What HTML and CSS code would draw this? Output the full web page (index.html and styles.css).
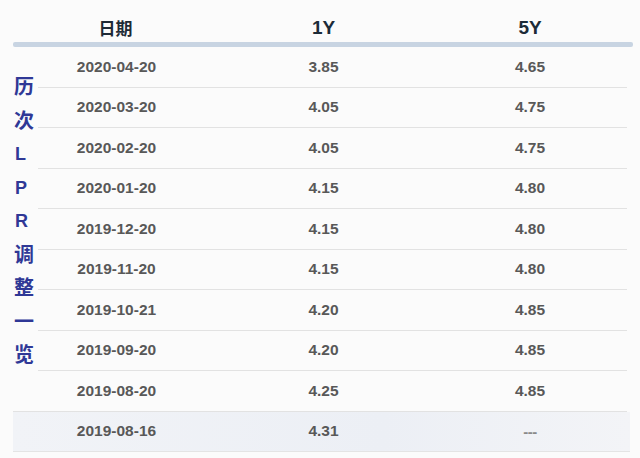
FILE: index.html
```html
<!DOCTYPE html>
<html lang="zh">
<head>
<meta charset="utf-8">
<link rel="stylesheet" href="styles.css">
</head>
<body>
<div class="page">
  <div class="table">
    <div class="head">
      <div class="hcell cn">日期</div>
      <div class="hcell">1Y</div>
      <div class="hcell">5Y</div>
    </div>
    <div class="bar"></div>
    <div class="row"><div>2020-04-20</div><div>3.85</div><div>4.65</div></div>
    <div class="row"><div>2020-03-20</div><div>4.05</div><div>4.75</div></div>
    <div class="row"><div>2020-02-20</div><div>4.05</div><div>4.75</div></div>
    <div class="row"><div>2020-01-20</div><div>4.15</div><div>4.80</div></div>
    <div class="row"><div>2019-12-20</div><div>4.15</div><div>4.80</div></div>
    <div class="row"><div>2019-11-20</div><div>4.15</div><div>4.80</div></div>
    <div class="row"><div>2019-10-21</div><div>4.20</div><div>4.85</div></div>
    <div class="row"><div>2019-09-20</div><div>4.20</div><div>4.85</div></div>
    <div class="row"><div>2019-08-20</div><div>4.25</div><div>4.85</div></div>
    <div class="row last"><div>2019-08-16</div><div>4.31</div><div class="dash">---</div></div>
  </div>
  <div class="vlabel">
    <span>历</span><span>次</span><span class="lat">L</span><span class="lat">P</span><span class="lat">R</span><span>调</span><span>整</span><span>一</span><span>览</span>
  </div>
</div>
</body>
</html>
```
FILE: styles.css
```css
html, body {
  margin: 0;
  padding: 0;
  background: #fbfbfb;
}
.page {
  position: relative;
  width: 640px;
  height: 458px;
  overflow: hidden;
  font-family: "Liberation Sans", Arial, "Noto Sans CJK SC", sans-serif;
}
.table {
  margin-left: 13px;
  width: 620px;
  display: flex;
  flex-direction: column;
}
.head {
  display: grid;
  grid-template-columns: 207px 207px 206px;
  height: 42px;
  align-items: center;
  padding-top: 14px;
  box-sizing: border-box;
}
.hcell {
  text-align: center;
  font-weight: bold;
  font-size: 19px;
  color: #1c2b38;
  line-height: 28px;
}
.hcell.cn {
  font-family: "Noto Sans CJK SC", sans-serif;
  font-size: 17px;
  color: #1e2a36;
  padding-right: 2px;
}
.bar {
  height: 5px;
  background: #c8d4e2;
  border-radius: 2px;
}
.row {
  display: grid;
  grid-template-columns: 207px 207px 206px;
  height: 40.5px;
  align-items: center;
  border-bottom: 1px solid #e2e2e2;
  box-sizing: border-box;
  width: 614px;
  font-weight: bold;
  font-size: 15.5px;
  color: #585858;
}
.row > div {
  text-align: center;
}
.row.last {
  background: linear-gradient(90deg, #f1f3f7 0%, #eceff5 60%, #f3f4f7 100%);
  border-bottom: 1px solid #e4e4e4;
  width: 617px;
}
.dash {
  font-size: 15px;
  color: #8a8a8a;
  letter-spacing: -0.5px;
}
.vlabel {
  position: absolute;
  left: 12px;
  top: 71px;
  width: 24px;
  display: flex;
  flex-direction: column;
  align-items: flex-start;
  padding-left: 2px;
  font-family: "Liberation Sans", "Noto Sans CJK SC", sans-serif;
  font-weight: bold;
  font-size: 20px;
  line-height: 33.5px;
  color: #2f3896;
  background: #fbfbfb;
}
.vlabel .lat {
  font-size: 18px;
  padding-left: 1px;
}
```
